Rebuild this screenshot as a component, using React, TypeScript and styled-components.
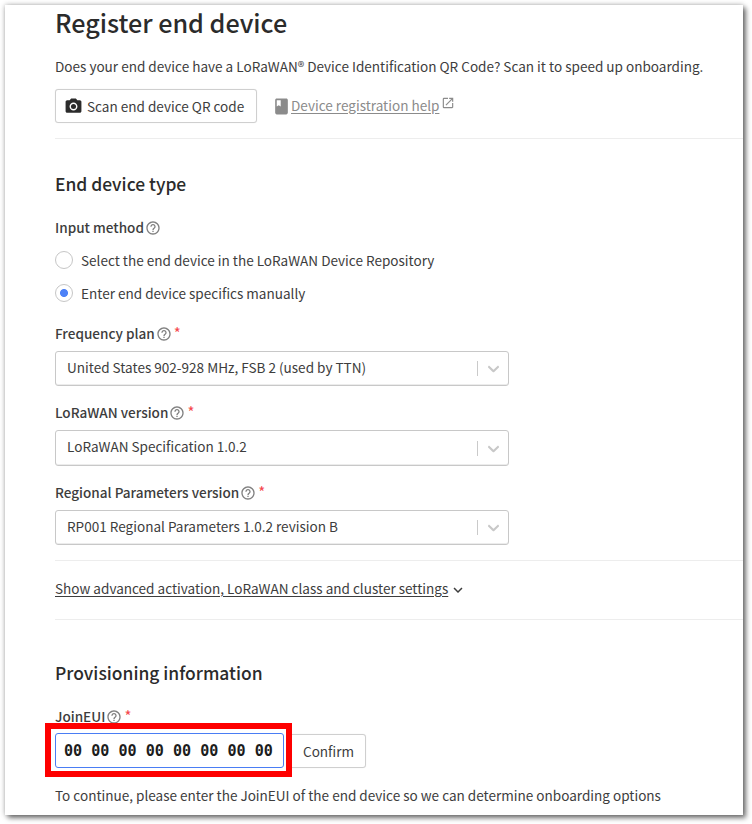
import React from 'react';
import styled, { createGlobalStyle } from 'styled-components';
import { MdPhotoCamera, MdClass, MdOpenInNew, MdHelpOutline, MdExpandMore } from 'react-icons/md';

const GlobalStyle = createGlobalStyle`
  *, *::before, *::after { box-sizing: border-box; }
  body {
    margin: 0;
    background: #fff;
    color: #3d3d3d;
    font: 400 13.55px/20px "Noto Sans CJK SC", "Noto Sans", sans-serif;
  }
  svg { display: block; flex: none; }
`;

const Window = styled.main`
  width: 738px;
  height: 810px;
  margin: 5px 0 9px 5px;
  padding: 1px 0 0 50px;
  background: #fff;
  box-shadow: 0 0 5px rgba(0, 0, 0, 0.3), 3px 3px 5px rgba(0, 0, 0, 0.5);
  overflow: hidden;
  white-space: nowrap;
`;

const Title = styled.h1`
  margin: 0;
  font-size: 25.15px;
  font-weight: 500;
  line-height: 32px;
  color: #2b2b2b;
`;

const Heading = styled.h2<{ $top: number }>`
  margin: ${p => p.$top}px 0 0;
  font-size: 17.45px;
  font-weight: 500;
  line-height: 24px;
  color: #2b2b2b;
`;

const Text = styled.p<{ $top: number }>`
  margin: ${p => p.$top}px 0 0;
`;

const Actions = styled.div`
  display: flex;
  align-items: center;
  margin-top: 13px;
`;

const Button = styled.button<{ $width: number; $pad?: number }>`
  display: flex;
  align-items: center;
  justify-content: flex-start;
  gap: 4px;
  width: ${p => p.$width}px;
  height: 34px;
  padding: 0 0 1px ${p => p.$pad ?? 8}px;
  border: 1px solid #cfcfcf;
  border-radius: 3px;
  background: #fff;
  box-shadow: 0 0 1px rgba(0, 0, 0, 0.12);
  color: #3d3d3d;
  font: inherit;
  svg { margin-top: 1px; color: #2b2b2b; }
`;

const HelpLink = styled.a`
  display: flex;
  align-items: center;
  margin-left: 15px;
  color: #8b8b8b;
  span {
    margin: -3px 2px 0 0;
    text-decoration: underline;
    text-underline-offset: 2px;
  }
  svg:last-child { margin-top: -6px; }
`;

const Divider = styled.hr<{ $top: number }>`
  height: 1px;
  margin: ${p => p.$top}px 0 0;
  border: 0;
  background: #ededed;
`;

const LabelRow = styled.div<{ $top: number }>`
  display: flex;
  align-items: center;
  height: 20px;
  margin-top: ${p => p.$top}px;
  font-weight: 500;
  svg { margin: 1px 0 0 1px; color: #808080; }
`;

const Required = styled.span`
  margin-left: 2px;
  color: #f5484d;
  font-size: 15px;
  font-weight: 400;
`;

const RadioRow = styled.label<{ $top: number }>`
  display: flex;
  align-items: center;
  gap: 8px;
  height: 20px;
  margin-top: ${p => p.$top}px;
`;

const RadioDot = styled.span<{ $on?: boolean }>`
  width: 18px;
  height: 18px;
  border: 1px solid #c6c6c6;
  border-radius: 50%;
  background: ${p => (p.$on ? 'radial-gradient(circle, #4e82f7 3.6px, #fff 4.4px)' : '#fff')};
`;

const SelectBox = styled.div<{ $top: number; $height?: number }>`
  display: flex;
  align-items: center;
  width: 454px;
  height: ${p => p.$height ?? 35}px;
  margin-top: ${p => p.$top}px;
  padding: 0 5px 0 11px;
  border: 1px solid #c8c8c8;
  border-radius: 3px;
  box-shadow: inset 0 -1px 0 #ececec;
  > span { flex: 1; height: 20px; margin-top: ${p => (p.$height ? -4 : -3)}px; }
`;

const Separator = styled.i`
  width: 1px;
  height: 15px;
  margin-right: 6px;
  background: #cacaca;
`;

const Disclosure = styled.div`
  display: flex;
  align-items: center;
  height: 20px;
  margin-top: 17px;
  span { text-decoration: underline; text-underline-offset: 2px; }
  svg { margin: 4px 0 0 1px; }
`;

const EuiRow = styled.div`
  display: flex;
  align-items: flex-start;
  margin: -3px 0 0 -10px;
`;

const Highlight = styled.div`
  z-index: 1;
  width: 247px;
  height: 54px;
  padding: 4px;
  border: 6px solid #fe0000;
`;

const EuiInput = styled.div`
  width: 229px;
  height: 35px;
  padding-left: 8px;
  border: 1px solid #4a7df4;
  border-radius: 3px;
  color: #1c1c1c;
  font: 700 15.08px/35px "DejaVu Sans Mono", monospace;
`;

const ConfirmSlot = styled.div`
  margin: 11px 0 0 -3px;
`;

const Label = ({ text, top, required = true }: { text: string; top: number; required?: boolean }) => (
  <LabelRow $top={top}>
    {text}
    <MdHelpOutline size={16} />
    {required && <Required>*</Required>}
  </LabelRow>
);

const Select = ({ value, top, height }: { value: string; top: number; height?: number }) => (
  <SelectBox $top={top} $height={height}>
    <span>{value}</span>
    <Separator />
    <svg width="19" height="19" viewBox="0 0 20 20" fill="#c8c8c8">
      <path d="M4.516 7.548c0.436-0.446 1.043-0.481 1.576 0l3.908 3.747 3.908-3.747c0.533-0.481 1.141-0.446 1.574 0 0.436 0.445 0.408 1.197 0 1.615-0.406 0.418-4.695 4.502-4.695 4.502-0.217 0.223-0.502 0.335-0.787 0.335s-0.57-0.112-0.789-0.335c0 0-4.287-4.084-4.695-4.502s-0.436-1.17 0-1.615z" />
    </svg>
  </SelectBox>
);

export default function App() {
  return (
    <>
      <GlobalStyle />
      <Window>
        <Title>Register end device</Title>
        <Text $top={18}>
          Does your end device have a LoRaWAN® Device Identification QR Code? Scan it to speed up onboarding.
        </Text>
        <Actions>
          <Button $width={202}>
            <MdPhotoCamera size={19} />
            Scan end device QR code
          </Button>
          <HelpLink>
            <MdClass size={19} />
            <span>Device registration help</span>
            <MdOpenInNew size={14} />
          </HelpLink>
        </Actions>
        <Divider $top={15} />

        <Heading $top={33}>End device type</Heading>
        <Label text="Input method" top={21} required={false} />
        <RadioRow $top={13}>
          <RadioDot />
          Select the end device in the LoRaWAN Device Repository
        </RadioRow>
        <RadioRow $top={13}>
          <RadioDot $on />
          Enter end device specifics manually
        </RadioRow>
        <Label text="Frequency plan" top={20} />
        <Select value="United States 902-928 MHz, FSB 2 (used by TTN)" top={8} />
        <Label text="LoRaWAN version" top={16} />
        <Select value="LoRaWAN Specification 1.0.2" top={8} height={36} />
        <Label text="Regional Parameters version" top={16} />
        <Select value="RP001 Regional Parameters 1.0.2 revision B" top={8} />
        <Divider $top={15} />

        <Disclosure>
          <span>Show advanced activation, LoRaWAN class and cluster settings</span>
          <MdExpandMore size={18} />
        </Disclosure>
        <Divider $top={21} />

        <Heading $top={41}>Provisioning information</Heading>
        <Label text="JoinEUI" top={21} />
        <EuiRow>
          <Highlight>
            <EuiInput>00 00 00 00 00 00 00 00</EuiInput>
          </Highlight>
          <ConfirmSlot>
            <Button $width={77} $pad={13}>Confirm</Button>
          </ConfirmSlot>
        </EuiRow>
        <Text $top={8}>
          To continue, please enter the JoinEUI of the end device so we can determine onboarding options
        </Text>
      </Window>
    </>
  );
}
